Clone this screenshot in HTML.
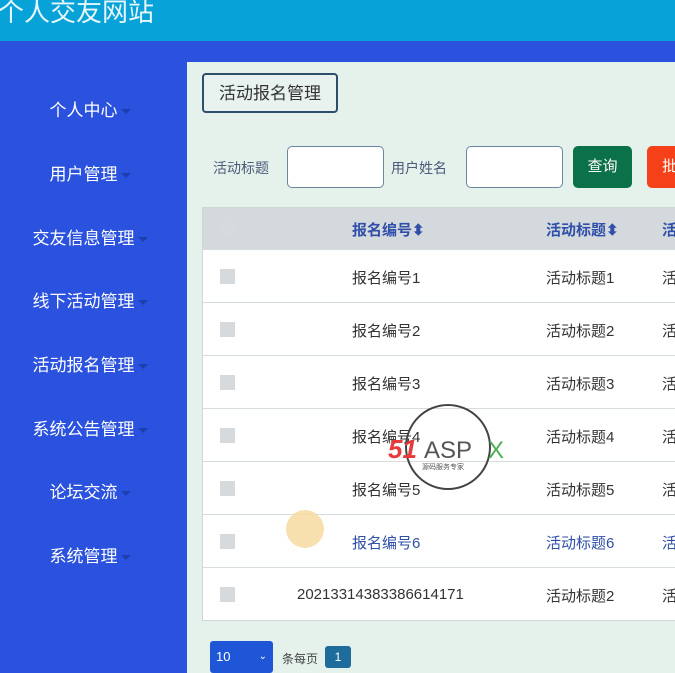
<!DOCTYPE html>
<html><head><meta charset="utf-8"><style>
*{margin:0;padding:0;box-sizing:border-box}
html,body{width:675px;height:673px;overflow:hidden}
body{background:#2a52de;font-family:"Liberation Sans","Noto Sans CJK SC",sans-serif;position:relative}
.hd{position:absolute;left:0;top:0;width:675px;height:41px;background:#07a3d8}
.hd span{position:absolute;left:-2px;top:-8px;font-size:26px;color:#e8f6fb}
.nav{position:absolute;left:0;width:180px;text-align:center;color:#fff;font-size:17px}
.nav i{display:inline-block;width:0;height:0;border-left:5px solid transparent;border-right:5px solid transparent;border-top:5px solid #1c3fb0;vertical-align:middle;margin-left:3px}
.main{position:absolute;left:187px;top:62px;width:500px;height:620px;background:#e5f2ec}
.tab{position:absolute;left:202px;top:73px;width:136px;height:40px;border:2px solid #2d4f6a;border-radius:4px;background:#e8f2ef;font-size:17px;color:#333;text-align:center;line-height:38px}
.lbl{position:absolute;font-size:14px;color:#4a5a78;top:158px}
.inp{position:absolute;top:146px;height:42px;background:#fff;border:1px solid #6a86a0;border-radius:5px}
.btn{position:absolute;top:146px;height:42px;border-radius:5px;color:#fff;font-size:15px;text-align:center;line-height:42px}
.tbl{position:absolute;left:202px;top:207px;width:480px;height:414px;background:#fff;border:1px solid #cfd6d8}
.th{position:absolute;left:0;top:0;width:100%;height:41px;background:#d3d9dc}
.row{position:absolute;left:0;width:100%;height:53px;border-top:1px solid #d6dcdc}
.cb{position:absolute;left:17px;width:15px;height:15px;background:#d6dadd}
.c{position:absolute;font-size:15px;color:#333;white-space:nowrap}
.h{color:#2f4fa8;font-weight:bold}
</style></head><body>
<div class="hd"><span>个人交友网站</span></div>
<div class="nav" style="top:96px">个人中心<i></i></div>
<div class="nav" style="top:160px">用户管理<i></i></div>
<div class="nav" style="top:224px">交友信息管理<i></i></div>
<div class="nav" style="top:287px">线下活动管理<i></i></div>
<div class="nav" style="top:351px">活动报名管理<i></i></div>
<div class="nav" style="top:415px">系统公告管理<i></i></div>
<div class="nav" style="top:478px">论坛交流<i></i></div>
<div class="nav" style="top:542px">系统管理<i></i></div>
<div class="main"></div>
<div class="tab">活动报名管理</div>
<div class="lbl" style="left:213px">活动标题</div>
<div class="inp" style="left:287px;width:97px"></div>
<div class="lbl" style="left:391px">用户姓名</div>
<div class="inp" style="left:466px;width:97px"></div>
<div class="btn" style="left:573px;width:59px;background:#0b7148">查询</div>
<div class="btn" style="left:647px;width:60px;background:#f5401a">批量</div>
<div class="tbl">
<div class="th"><div class="cb" style="top:13px"></div>
<div class="c h" style="left:149px;top:11px">报名编号⬍</div>
<div class="c h" style="left:343px;top:11px">活动标题⬍</div>
<div class="c h" style="left:459px;top:11px">活动</div></div>
<div class="row" style="top:41px"><div class="cb" style="top:19px"></div><div class="c" style="left:149px;top:17px">报名编号1</div><div class="c" style="left:343px;top:17px">活动标题1</div><div class="c" style="left:459px;top:17px">活动</div></div>
<div class="row" style="top:94px"><div class="cb" style="top:19px"></div><div class="c" style="left:149px;top:17px">报名编号2</div><div class="c" style="left:343px;top:17px">活动标题2</div><div class="c" style="left:459px;top:17px">活动</div></div>
<div class="row" style="top:147px"><div class="cb" style="top:19px"></div><div class="c" style="left:149px;top:17px">报名编号3</div><div class="c" style="left:343px;top:17px">活动标题3</div><div class="c" style="left:459px;top:17px">活动</div></div>
<div class="row" style="top:200px"><div class="cb" style="top:19px"></div><div class="c" style="left:149px;top:17px">报名编号4</div><div class="c" style="left:343px;top:17px">活动标题4</div><div class="c" style="left:459px;top:17px">活动</div></div>
<div class="row" style="top:253px"><div class="cb" style="top:19px"></div><div class="c" style="left:149px;top:17px">报名编号5</div><div class="c" style="left:343px;top:17px">活动标题5</div><div class="c" style="left:459px;top:17px">活动</div></div>
<div class="row" style="top:306px"><div class="cb" style="top:19px"></div><div class="c" style="left:149px;top:17px;color:#2f4fa8">报名编号6</div><div class="c" style="left:343px;top:17px;color:#2f4fa8">活动标题6</div><div class="c" style="left:459px;top:17px;color:#2f4fa8">活动</div></div>
<div class="row" style="top:359px"><div class="cb" style="top:19px"></div><div class="c" style="left:94px;top:18px">20213314383386614171</div><div class="c" style="left:343px;top:17px">活动标题2</div><div class="c" style="left:459px;top:17px">活动</div></div>
</div>
<div style="position:absolute;left:286px;top:510px;width:38px;height:38px;border-radius:50%;background:#f7dba0;opacity:.85"></div>
<svg style="position:absolute;left:388px;top:403px" width="125" height="90"><circle cx="60" cy="44" r="42" fill="none" stroke="#444" stroke-width="2"/><text x="0" y="55" font-family="Liberation Sans" font-weight="bold" font-style="italic" font-size="26" fill="#e83a3a">51</text><text x="36" y="55" font-family="Liberation Sans" font-size="24" fill="#555">ASP</text><text x="100" y="55" font-family="Liberation Sans" font-size="24" fill="#4caf50">X</text><text x="34" y="66" font-size="7" fill="#555" font-family="Noto Sans CJK SC">源码服务专家</text></svg>
<div style="position:absolute;left:210px;top:641px;width:63px;height:32px;background:#1f56d8;border-radius:3px;color:#fff;font-size:13px;line-height:32px;padding-left:6px">10<span style="position:absolute;right:6px;font-size:10px">⌄</span></div>
<div style="position:absolute;left:282px;top:650px;font-size:12px;color:#444">条每页</div>
<div style="position:absolute;left:325px;top:646px;width:26px;height:22px;background:#1d6c9c;border-radius:3px;color:#fff;font-size:12px;text-align:center;line-height:22px">1</div>
</body></html>
